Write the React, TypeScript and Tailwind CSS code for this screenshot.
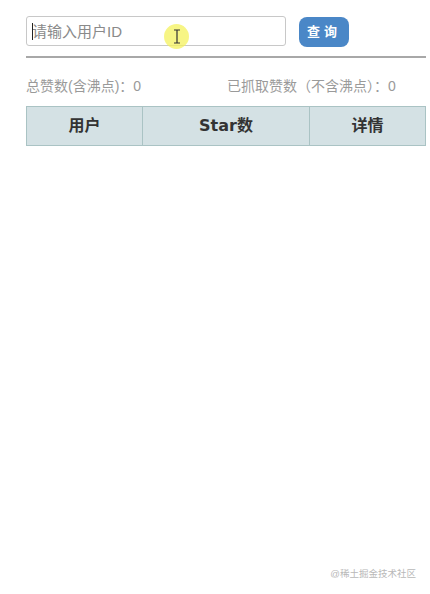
export default function App() {
  return (
    <div
      className="relative h-[594px] w-[430px] bg-white pl-[26px] pr-[4px] pt-[16px]"
      style={{ fontFamily: '"Liberation Sans", "Noto Sans CJK SC", sans-serif' }}
    >
      {/* Search bar */}
      <div className="flex h-[30px] items-start gap-[13px]">
        <div className="relative h-[30px] w-[260px] rounded-[3px] border border-[#c8c8c8]">
          <input
            className="h-full w-full bg-transparent pl-[5px] text-[15px] text-[#333] outline-none placeholder:text-[#8a8a8a]"
            placeholder="请输入用户ID"
          />
          <span className="absolute left-[5px] top-[6px] h-[17px] w-[1px] bg-[#222]" />
        </div>
        <button className="mt-[1px] h-[30px] w-[50px] rounded-[8px] bg-[#4a87c7] text-[13px] font-bold tracking-[4px] text-white">
          查询
        </button>
      </div>

      {/* Divider */}
      <div className="mt-[10px] h-[2px] w-full bg-[#a8a8a8]" />

      {/* Stats */}
      <div className="mt-[18px] flex text-[14px] leading-[20px] text-[#9a9a9a]">
        <span className="w-[201px]">总赞数(含沸点)：0</span>
        <span>已抓取赞数（不含沸点）：0</span>
      </div>

      {/* Table */}
      <table
        className="mt-[10px] w-full border-collapse text-[16px] font-bold text-[#333]"
        style={{ fontFamily: '"DejaVu Sans", "Noto Sans CJK SC", sans-serif' }}
      >
        <thead>
          <tr className="h-[39px] bg-[#d4e1e4]">
            <th className="w-[116px] border border-[#aac3c4]">用户</th>
            <th className="w-[167px] border border-[#aac3c4]">Star数</th>
            <th className="border border-[#aac3c4]">详情</th>
          </tr>
        </thead>
      </table>

      {/* Mouse highlight */}
      <div className="pointer-events-none absolute left-[164px] top-[24px] flex h-[25px] w-[25px] items-center justify-center rounded-full bg-[#f4f25c]/75">
        <svg width="8" height="15" viewBox="0 0 8 15" fill="none" stroke="#333" strokeWidth="1.2">
          <path d="M1 1h6M1 14h6M4 1v13" />
        </svg>
      </div>

      {/* Watermark */}
      <div className="absolute bottom-[13px] right-[14px] text-[9.5px] text-[#b8b8b8]">@稀土掘金技术社区</div>
    </div>
  )
}
